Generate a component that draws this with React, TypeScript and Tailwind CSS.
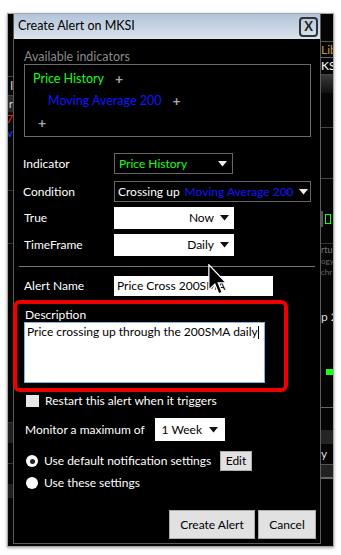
import React from 'react';

function Caret({ dark }: { dark?: boolean }) {
  return (
    <svg width="9" height="6" viewBox="0 0 9 6" className="flex-shrink-0">
      <path d="M0 0 L9 0 L4.5 5.5 Z" fill={dark ? '#111' : '#eee'} />
    </svg>
  );
}

function Plus() {
  return <span className="text-[#a8a8a8] font-bold text-[14px] leading-none">+</span>;
}

export default function App() {
  return (
    <div className="w-[341px] h-[555px] bg-white font-['Lato',sans-serif] text-[12px] overflow-hidden">
      {/* Screenshot frame */}
      <div className="ml-[7px] mt-[13px] w-[327px] h-[534px] border border-[#a5a5a5] bg-[#050505] flex shadow-[0_1px_3px_rgba(0,0,0,0.35)] overflow-hidden">
        {/* Left strip of the app behind */}
        <div className="w-[5px] flex flex-col overflow-hidden text-[12px] leading-none">
          <div className="h-[62px]" />
          <div className="h-[1px] bg-[#444]" />
          <div className="h-[18px] flex items-center justify-end">
            <span className="text-[#ddd]">l</span>
          </div>
          <div className="h-[1px] bg-[#444]" />
          <div className="h-[16px] bg-[#2a2a2a] flex items-center justify-end">
            <span className="text-[#ccc]">r</span>
          </div>
          <div className="h-[14px] flex items-center justify-end">
            <span className="text-[#ff2020]">7</span>
          </div>
          <div className="h-[14px] flex items-center justify-end">
            <span className="text-[#2040ff]">v</span>
          </div>
          <div className="h-[50px]" />
          <div className="h-[1px] bg-[#333]" />
          <div className="h-[52px]" />
          <div className="h-[1px] bg-[#333]" />
          <div className="h-[160px]" />
          <div className="h-[18px]" />
          <div className="h-[1px] bg-[#333]" />
          <div className="h-[20px] bg-[#202020]" />
          <div className="h-[20px]" />
          <div className="h-[1px] bg-[#333]" />
          <div className="h-[20px]" />
          <div className="h-[14px] bg-[#202020]" />
        </div>

        {/* Dialog */}
        <div className="relative w-[308px] h-[530px] flex flex-col border-x border-b border-[#5c5c5c] bg-black text-white">
          {/* Title bar */}
          <div className="h-[25px] flex items-center justify-between pl-[4px] pr-[2px] bg-gradient-to-b from-[#b3c4da] to-[#dbe3ec] text-black text-[12.5px]">
            <span>Create Alert on MKSI</span>
            <div className="w-[19px] h-[20px] border-2 border-[#333] rounded-[4px] flex items-center justify-center font-bold text-[13px] leading-none text-[#222]">
              X
            </div>
          </div>

          <div className="mt-[10px] ml-[10px] h-[15px] leading-[15px] text-[#8a8a8a] text-[12.5px]">Available indicators</div>

          <div className="mx-[10px] mr-[9px] h-[73px] border border-[#6a6a6a] pt-[3px] pl-[8px] text-[12.5px]">
            <div className="h-[22px] flex items-center gap-[11px]">
              <span className="text-[#16ff16]">Price History</span>
              <Plus />
            </div>
            <div className="h-[22px] flex items-center gap-[11px] pl-[15px]">
              <span className="text-[#1414ff]">Moving Average 200</span>
              <Plus />
            </div>
            <div className="h-[22px] flex items-center pl-[5px]">
              <Plus />
            </div>
          </div>

          <div className="mt-[16px] h-[21px] flex items-center">
            <span className="w-[100px] pl-[9px]">Indicator</span>
            <div className="w-[119px] h-[21px] border border-[#666] flex items-center justify-between pl-[4px] pr-[5px] text-[#16ff16]">
              <span>Price History</span>
              <Caret />
            </div>
          </div>

          <div className="mt-[7px] h-[21px] flex items-center">
            <span className="w-[100px] pl-[9px]">Condition</span>
            <div className="w-[197px] h-[21px] border border-[#666] flex items-center pl-[3px] pr-[5px] gap-[5px] whitespace-nowrap">
              <span>Crossing up</span>
              <span className="text-[#1414ff] flex-1">Moving Average 200</span>
              <Caret />
            </div>
          </div>

          <div className="mt-[5px] h-[22px] flex items-center">
            <span className="w-[100px] pl-[10px]">True</span>
            <div className="w-[120px] h-[22px] bg-white text-black flex items-center justify-end gap-[6px] pr-[5px]">
              <span>Now</span>
              <Caret dark />
            </div>
          </div>

          <div className="mt-[5px] h-[22px] flex items-center">
            <span className="w-[100px] pl-[10px]">TimeFrame</span>
            <div className="w-[120px] h-[22px] bg-white text-black flex items-center justify-end gap-[6px] pr-[5px]">
              <span>Daily</span>
              <Caret dark />
            </div>
          </div>

          <div className="mt-[10px] mx-[5px] h-[1px] bg-[#777]" />

          <div className="mt-[9px] h-[20px] flex items-center">
            <span className="w-[100px] pl-[10px]">Alert Name</span>
            <div className="w-[159px] h-[20px] bg-white text-black flex items-center pl-[3px]">Price Cross 200SMA</div>
          </div>

          <div className="mt-[12px] ml-[11px] h-[14px] leading-[14px]">Description</div>
          <div className="ml-[10px] w-[241px] h-[61px] bg-white border border-[#7eb4ea] text-black pl-[2px] pt-[1px] leading-[15px] whitespace-nowrap">
            Price crossing up through the 200SMA daily<span className="inline-block w-[1px] h-[13px] bg-black align-middle" />
          </div>

          <div className="mt-[12px] h-[12px] flex items-center gap-[6px] pl-[12px]">
            <div className="w-[13px] h-[12px] bg-[#e8e8e8]" />
            <span>Restart this alert when it triggers</span>
          </div>

          <div className="mt-[11px] h-[23px] flex items-center">
            <span className="w-[141px] pl-[11px]">Monitor a maximum of</span>
            <div className="w-[70px] h-[23px] bg-white text-black flex items-center justify-end gap-[7px] pr-[7px]">
              <span>1 Week</span>
              <Caret dark />
            </div>
          </div>

          <div className="mt-[10px] h-[20px] flex items-center pl-[12px]">
            <div className="w-[12px] h-[12px] rounded-full bg-white flex items-center justify-center">
              <div className="w-[5px] h-[5px] rounded-full bg-[#222]" />
            </div>
            <span className="ml-[6px] w-[176px] whitespace-nowrap">Use default notification settings</span>
            <div className="w-[32px] h-[20px] bg-[#e1e1e1] border border-[#adadad] text-black flex items-center justify-center">Edit</div>
          </div>

          <div className="mt-[4px] h-[16px] flex items-center pl-[12px]">
            <div className="w-[12px] h-[12px] rounded-full bg-white" />
            <span className="ml-[6px]">Use these settings</span>
          </div>

          <div className="mt-[19px] h-[29px] flex justify-end gap-[3px] pr-[4px]">
            <div className="w-[86px] h-[29px] bg-[#e1e1e1] border border-[#adadad] text-black flex items-center justify-center">Create Alert</div>
            <div className="w-[58px] h-[29px] bg-[#e1e1e1] border border-[#adadad] text-black flex items-center justify-center">Cancel</div>
          </div>

          {/* Red annotation box */}
          <div className="absolute left-[-1px] top-[286px] w-[275px] h-[92px] border-[4px] border-[#ee0000] rounded-[7px] pointer-events-none" />

          {/* Mouse pointer */}
          <svg className="absolute left-[194px] top-[250px]" width="19" height="33" viewBox="0 0 12 21">
            <path d="M0.5 0.5 L0.5 16.5 L4.3 12.8 L6.8 19 L9 18.1 L6.5 12 L11.5 12 Z" fill="#000" stroke="#fff" strokeWidth="0.8" strokeLinejoin="miter" />
          </svg>
        </div>

        {/* Right strip of the app behind */}
        <div className="flex-1 flex flex-col overflow-hidden text-[12px] leading-none whitespace-nowrap">
          <div className="h-[27px]" />
          <div className="h-[1px] bg-[#555]" />
          <div className="h-[15px] text-[#c89a3c] flex items-center">Lib</div>
          <div className="h-[1px] bg-[#666]" />
          <div className="h-[16px] text-white flex items-center">KSI</div>
          <div className="h-[1px] bg-[#444]" />
          <div className="h-[18px] bg-gradient-to-b from-[#3a3a3a] to-[#101010]" />
          <div className="h-[34px]" />
          <div className="h-[1px] bg-[#444]" />
          <div className="h-[50px]" />
          <div className="h-[1px] bg-[#444]" />
          <div className="h-[30px]" />
          <div className="h-[20px] flex items-center gap-[2px]">
            <div className="w-[2px] h-[16px] bg-[#555]" />
            <div className="w-[6px] h-[10px] border border-[#16ff16]" />
          </div>
          <div className="h-[14px]" />
          <div className="h-[1px] bg-[#333]" />
          <div className="h-[12px] text-[#777] text-[9px] leading-[12px]">rtu</div>
          <div className="h-[11px] text-[#666] text-[8px] leading-[11px]">ogy</div>
          <div className="h-[11px] text-[#666] text-[8px] leading-[11px]">chr</div>
          <div className="h-[32px]" />
          <div className="h-[14px] text-[#ddd] flex items-center">p 2</div>
          <div className="h-[45px]" />
          <div className="h-[6px] w-[7px] ml-[5px] bg-[#16ff16]" />
          <div className="h-[32px]" />
          <div className="h-[1px] bg-[#666]" />
          <div className="h-[22px]" />
          <div className="h-[14px] bg-[#242424]" />
          <div className="h-[20px] text-[#ddd] flex items-center">y</div>
          <div className="h-[1px] bg-[#555]" />
          <div className="h-[12px] bg-[#222]" />
          <div className="h-[2px] bg-[#666]" />
        </div>
      </div>
    </div>
  );
}
